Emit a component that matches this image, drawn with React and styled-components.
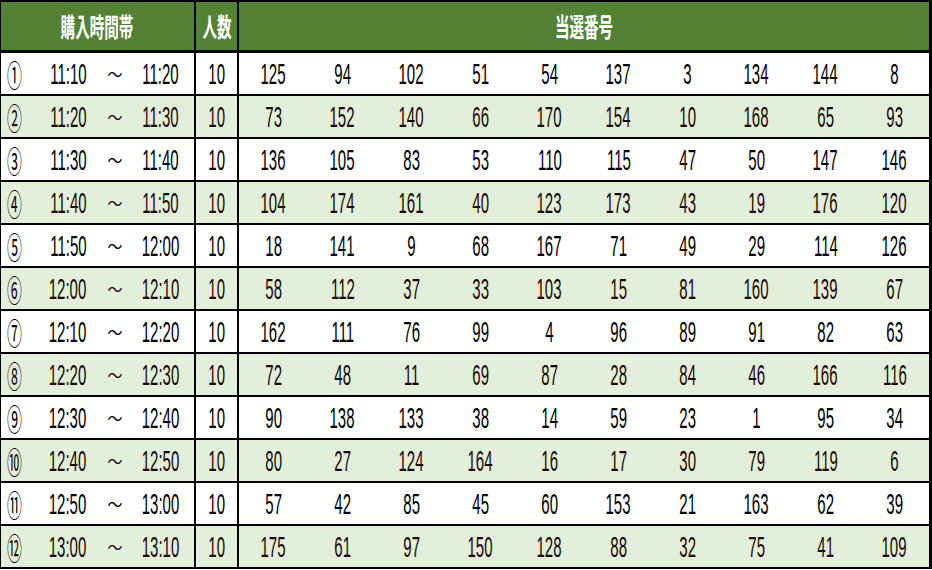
import React from 'react';
import styled, { createGlobalStyle } from 'styled-components';

const GlobalStyle = createGlobalStyle`
    html, body {
        margin: 0;
        padding: 0;
        background: #ffffff;
    }
    body {
        font-family: "Liberation Sans", "Noto Sans CJK JP", sans-serif;
    }
`

const rows = [
    ['①', '11:10', '11:20', [125, 94, 102, 51, 54, 137, 3, 134, 144, 8]],
    ['②', '11:20', '11:30', [73, 152, 140, 66, 170, 154, 10, 168, 65, 93]],
    ['③', '11:30', '11:40', [136, 105, 83, 53, 110, 115, 47, 50, 147, 146]],
    ['④', '11:40', '11:50', [104, 174, 161, 40, 123, 173, 43, 19, 176, 120]],
    ['⑤', '11:50', '12:00', [18, 141, 9, 68, 167, 71, 49, 29, 114, 126]],
    ['⑥', '12:00', '12:10', [58, 112, 37, 33, 103, 15, 81, 160, 139, 67]],
    ['⑦', '12:10', '12:20', [162, 111, 76, 99, 4, 96, 89, 91, 82, 63]],
    ['⑧', '12:20', '12:30', [72, 48, 11, 69, 87, 28, 84, 46, 166, 116]],
    ['⑨', '12:30', '12:40', [90, 138, 133, 38, 14, 59, 23, 1, 95, 34]],
    ['⑩', '12:40', '12:50', [80, 27, 124, 164, 16, 17, 30, 79, 119, 6]],
    ['⑪', '12:50', '13:00', [57, 42, 85, 45, 60, 153, 21, 163, 62, 39]],
    ['⑫', '13:00', '13:10', [175, 61, 97, 150, 128, 88, 32, 75, 41, 109]],
]

const Sheet = styled.div`
    width: 932px;
    box-sizing: border-box;
    border-top: 2px solid #000;
    border-left: 1px solid #000;
    border-right: 3px solid #000;
`

const HeadRow = styled.div`
    display: flex;
    height: 48px;
    background: #548235;
    border-bottom: 3px solid #000;
`

const Row = styled.div`
    display: flex;
    height: 41px;
    background: ${p => p.$alt ? '#e2efda' : '#ffffff'};
    color: ${p => p.$alt ? '#1c0a04' : '#000000'};
    border-bottom: 2px solid #000;
`

const TimeCell = styled.div`
    width: 193px;
    flex: none;
    border-right: 2px solid #000;
    display: flex;
    align-items: center;
    justify-content: ${p => p.$head ? 'center' : 'flex-start'};
`

const CountCell = styled.div`
    width: 41px;
    flex: none;
    border-right: 2px solid #000;
    display: flex;
    align-items: center;
    justify-content: center;
`

const Numbers = styled.div`
    flex: 1;
    display: grid;
    grid-template-columns: repeat(${p => p.$cols}, 1fr);
    align-items: center;
    justify-items: center;
`

const Slot = styled.div`
    width: ${p => p.$w}px;
    margin-left: ${p => p.$ml || 0}px;
    flex: none;
    display: flex;
    justify-content: center;
    align-items: center;
`

const Narrow = styled.span`
    display: inline-block;
    font-size: 30px;
    line-height: 1;
    white-space: nowrap;
    transform: scaleX(0.5);
`

const Circled = styled.span`
    display: inline-block;
    font-family: "Noto Sans CJK JP", sans-serif;
    font-size: 31px;
    line-height: 1;
    transform: scaleX(0.48);
`

const Tilde = styled.span`
    font-family: "Noto Sans CJK JP", sans-serif;
    font-size: 15px;
    line-height: 1;
`

const HeadText = styled.span`
    display: inline-block;
    color: #ffffff;
    font-family: "Noto Sans CJK JP", sans-serif;
    font-weight: 700;
    font-size: 26px;
    line-height: 1;
    white-space: nowrap;
    transform: scaleX(0.56);
`

const App = () => {
    return (
        <>
            <GlobalStyle />
            <Sheet>
                <HeadRow>
                    <TimeCell $head><HeadText>購入時間帯</HeadText></TimeCell>
                    <CountCell><HeadText>人数</HeadText></CountCell>
                    <Numbers $cols={1}><HeadText>当選番号</HeadText></Numbers>
                </HeadRow>
                {
                    rows.map(([mark, from, to, nums], index) => (
                        <Row key={mark} $alt={index % 2 == 1}>
                            <TimeCell>
                                <Slot $w={26}><Circled>{mark}</Circled></Slot>
                                <Slot $w={60} $ml={11}><Narrow>{from}</Narrow></Slot>
                                <Slot $w={28} $ml={3}><Tilde>～</Tilde></Slot>
                                <Slot $w={63}><Narrow>{to}</Narrow></Slot>
                            </TimeCell>
                            <CountCell><Narrow>10</Narrow></CountCell>
                            <Numbers $cols={10}>
                                {nums.map((n, i) => <Narrow key={i}>{n}</Narrow>)}
                            </Numbers>
                        </Row>
                    ))
                }
            </Sheet>
        </>
    );
};

export default App;
